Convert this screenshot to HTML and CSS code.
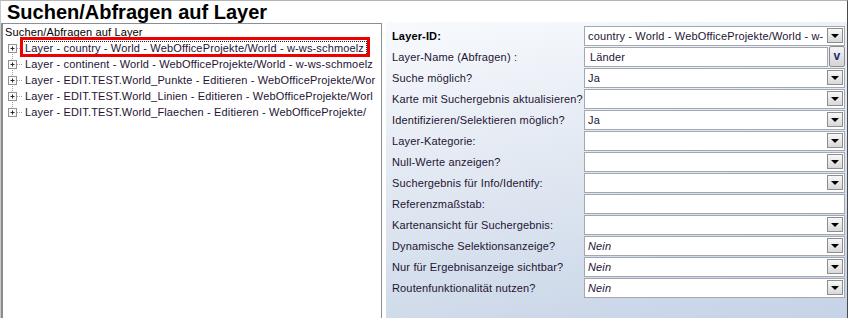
FILE: index.html
```html
<!DOCTYPE html>
<html lang="de">
<head>
  <meta charset="UTF-8" />
  <title>Suchen/Abfragen auf Layer</title>
  <link rel="stylesheet" href="styles.css">
</head>
<body>
  <div class="window">
    <h1 class="title">Suchen/Abfragen auf Layer</h1>

    <div class="main">
      <!-- Baum links -->
      <div class="tree">
        <div class="tree-root">Suchen/Abfragen auf Layer</div>
        <ul class="tree-items">
          <li class="first selected">
            <svg class="gutter" width="19" height="16" viewBox="0 0 19 16">
              <line x1="9.5" y1="8" x2="9.5" y2="16" class="dots" />
              <line x1="14" y1="8.5" x2="19" y2="8.5" class="dots" />
              <rect x="5.5" y="4.5" width="8" height="8" class="box" />
              <path d="M7.5 8.5h4M9.5 6.5v4" class="plus" />
            </svg>
            <span class="node">Layer - country - World - WebOfficeProjekte/World - w-ws-schmoelz</span>
            <span class="mark"></span>
          </li>
          <li>
            <svg class="gutter" width="19" height="16" viewBox="0 0 19 16">
              <line x1="9.5" y1="0" x2="9.5" y2="16" class="dots" />
              <line x1="14" y1="8.5" x2="19" y2="8.5" class="dots" />
              <rect x="5.5" y="4.5" width="8" height="8" class="box" />
              <path d="M7.5 8.5h4M9.5 6.5v4" class="plus" />
            </svg>
            <span class="node">Layer - continent - World - WebOfficeProjekte/World - w-ws-schmoelz</span>
          </li>
          <li>
            <svg class="gutter" width="19" height="16" viewBox="0 0 19 16">
              <line x1="9.5" y1="0" x2="9.5" y2="16" class="dots" />
              <line x1="14" y1="8.5" x2="19" y2="8.5" class="dots" />
              <rect x="5.5" y="4.5" width="8" height="8" class="box" />
              <path d="M7.5 8.5h4M9.5 6.5v4" class="plus" />
            </svg>
            <span class="node">Layer - EDIT.TEST.World_Punkte - Editieren - WebOfficeProjekte/Wor</span>
          </li>
          <li>
            <svg class="gutter" width="19" height="16" viewBox="0 0 19 16">
              <line x1="9.5" y1="0" x2="9.5" y2="16" class="dots" />
              <line x1="14" y1="8.5" x2="19" y2="8.5" class="dots" />
              <rect x="5.5" y="4.5" width="8" height="8" class="box" />
              <path d="M7.5 8.5h4M9.5 6.5v4" class="plus" />
            </svg>
            <span class="node">Layer - EDIT.TEST.World_Linien - Editieren - WebOfficeProjekte/Worl</span>
          </li>
          <li>
            <svg class="gutter" width="19" height="16" viewBox="0 0 19 16">
              <line x1="9.5" y1="0" x2="9.5" y2="8" class="dots" />
              <line x1="14" y1="8.5" x2="19" y2="8.5" class="dots" />
              <rect x="5.5" y="4.5" width="8" height="8" class="box" />
              <path d="M7.5 8.5h4M9.5 6.5v4" class="plus" />
            </svg>
            <span class="node">Layer - EDIT.TEST.World_Flaechen - Editieren - WebOfficeProjekte/</span>
          </li>
        </ul>
      </div>

      <!-- Eigenschaften rechts -->
      <div class="props">
        <div class="row">
          <label class="bold">Layer-ID:</label>
          <div class="field"><span class="value">country - World - WebOfficeProjekte/World - w-</span><span class="drop"></span></div>
        </div>
        <div class="row">
          <label>Layer-Name (Abfragen) :</label>
          <div class="split">
            <div class="field text"><span class="value">Länder</span></div>
            <span class="vbtn">v</span>
          </div>
        </div>
        <div class="row">
          <label>Suche möglich?</label>
          <div class="field"><span class="value">Ja</span><span class="drop"></span></div>
        </div>
        <div class="row">
          <label>Karte mit Suchergebnis aktualisieren?</label>
          <div class="field"><span class="value"></span><span class="drop"></span></div>
        </div>
        <div class="row">
          <label>Identifizieren/Selektieren möglich?</label>
          <div class="field"><span class="value">Ja</span><span class="drop"></span></div>
        </div>
        <div class="row">
          <label>Layer-Kategorie:</label>
          <div class="field"><span class="value"></span><span class="drop"></span></div>
        </div>
        <div class="row">
          <label>Null-Werte anzeigen?</label>
          <div class="field"><span class="value"></span><span class="drop"></span></div>
        </div>
        <div class="row">
          <label>Suchergebnis für Info/Identify:</label>
          <div class="field"><span class="value"></span><span class="drop"></span></div>
        </div>
        <div class="row">
          <label>Referenzmaßstab:</label>
          <div class="field"><span class="value"></span></div>
        </div>
        <div class="row">
          <label>Kartenansicht für Suchergebnis:</label>
          <div class="field"><span class="value"></span><span class="drop"></span></div>
        </div>
        <div class="row">
          <label>Dynamische Selektionsanzeige?</label>
          <div class="field"><span class="value italic">Nein</span><span class="drop"></span></div>
        </div>
        <div class="row">
          <label>Nur für Ergebnisanzeige sichtbar?</label>
          <div class="field"><span class="value italic">Nein</span><span class="drop"></span></div>
        </div>
        <div class="row">
          <label>Routenfunktionalität nutzen?</label>
          <div class="field"><span class="value italic">Nein</span><span class="drop"></span></div>
        </div>
      </div>
    </div>
  </div>
</body>
</html>
```

FILE: styles.css
```css
* { box-sizing: border-box; }

body {
  margin: 0;
  background: #fff;
  font-family: "Liberation Sans", Arial, sans-serif;
  font-size: 11px;
  letter-spacing: 0.15px;
  color: #1e1433;
}

.window {
  width: 848px;
  height: 318px;
  border-top: 1px solid #b4b4b4;
  border-left: 1px solid #c8c8c8;
  border-right: 1px solid #4a4a4a;
  display: flex;
  flex-direction: column;
  overflow: hidden;
}

.title {
  margin: 0;
  height: 22px;
  padding: 0 0 0 6px;
  font-size: 20px;
  font-weight: bold;
  letter-spacing: 0;
  color: #000;
  line-height: 22px;
}

.main {
  flex: 1;
  display: flex;
  gap: 4px;
  margin-left: -1px;
}

/* Baum */
.tree {
  width: 382px;
  flex: none;
  border-top: 1px solid #8a8f97;
  border-left: 3px solid #8c8c8c;
  border-right: 1px solid #8a8f97;
  background: #fff;
}

.tree-root {
  height: 16px;
  line-height: 16px;
  padding-left: 2px;
  color: #000;
}

.tree-items {
  list-style: none;
  margin: 0;
  padding: 0;
}

.tree-items li {
  position: relative;
  display: flex;
  align-items: center;
  height: 16px;
  white-space: nowrap;
}

.gutter { flex: none; }

.gutter .dots {
  stroke: #a0a0a0;
  stroke-width: 1;
  stroke-dasharray: 1 1;
}

.gutter .box {
  fill: #fafafa;
  stroke: #919191;
}

.gutter .plus {
  stroke: #2a2a2a;
  stroke-width: 1;
  fill: none;
}

.node {
  padding: 0 2px;
  height: 15px;
  line-height: 13px;
  border: 1px solid transparent;
}

.selected .node {
  border: 1px dotted #222;
}

/* rote Markierung ueber dem Eintrag */
.mark {
  position: absolute;
  left: 17px;
  top: -3px;
  width: 350px;
  height: 20px;
  border: 3px solid #ee0000;
}

/* Eigenschaften */
.props {
  flex: 1;
  min-width: 0;
  margin-top: -1px;
  padding: 3px 2px 0 6px;
  background: linear-gradient(170deg, #f8fafd 0%, #e4eaf3 40%, #c5d3e6 100%);
}

.row {
  display: flex;
  align-items: center;
  height: 21px;
}

.row label {
  width: 192px;
  flex: none;
  white-space: nowrap;
}

.row label.bold {
  font-weight: bold;
  color: #000;
}

.field {
  flex: 1;
  min-width: 0;
  height: 20px;
  display: flex;
  align-items: center;
  background: #fff;
  border: 1px solid #a3a8b0;
  padding: 0 1px 0 3px;
}

.value {
  flex: 1;
  min-width: 0;
  white-space: nowrap;
  overflow: hidden;
}

.value.italic { font-style: italic; }

.drop {
  flex: none;
  width: 16px;
  height: 15px;
  border: 1px solid #8e8e8e;
  background: linear-gradient(#f8f8f8, #d8d8d8);
  display: flex;
  align-items: center;
  justify-content: center;
}

.drop::after {
  content: "";
  border-left: 4px solid transparent;
  border-right: 4px solid transparent;
  border-top: 4px solid #000;
}

.split {
  flex: 1;
  min-width: 0;
  display: flex;
  align-items: center;
  gap: 1px;
}

.split .field.text {
  padding-left: 5px;
}

.vbtn {
  flex: none;
  width: 16px;
  height: 21px;
  border: 1px solid #8e8e8e;
  border-radius: 2px;
  background: linear-gradient(#f4f4f4, #d4d4d4);
  color: #1a2a78;
  font-weight: bold;
  font-size: 12px;
  text-align: center;
  line-height: 18px;
}
```
